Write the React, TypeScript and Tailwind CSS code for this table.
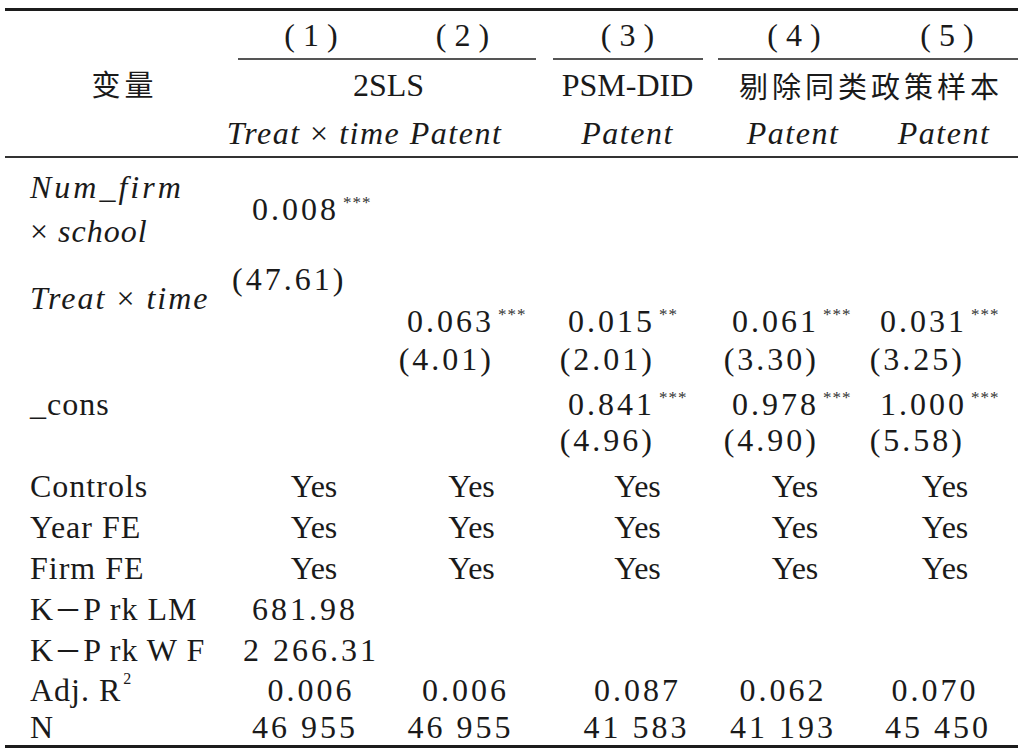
import React from 'react';

const GRID = 'grid grid-cols-[227px_158px_155px_165px_160px_148px]';
const SERIF = "font-['Liberation_Serif','Noto_Sans_CJK_SC']";

type CellSpec = { v: string; cls?: string };

// coefficient with significance stars hanging to the right of the number
function Coef({ v, s, cls = 'pr-[11px]' }: { v: string; s?: string; cls?: string }) {
	return (
		<div className={`flex items-center justify-end ${cls}`}>
			<span className={`inline-flex items-start ${SERIF}`}>
				<span className={`tracking-[3px] ${SERIF}`}>{v}</span>
				<span className={`w-[40px] pl-[4px] pt-[1px] text-[17px] leading-none tracking-[1px] text-[#333] ${SERIF}`}>{s}</span>
			</span>
		</div>
	);
}

function Plain({ v, cls = '' }: CellSpec) {
	return <div className={`flex items-center justify-center tracking-[3px] ${SERIF} ${cls}`}>{v}</div>;
}

function Label({ children }: { children: React.ReactNode }) {
	return <div className={`flex items-center pl-[25px] tracking-[1px] ${SERIF}`}>{children}</div>;
}

function Cjk({ children }: { children: React.ReactNode }) {
	return <span className="font-['Noto_Sans_CJK_SC'] text-[29px] tracking-[4px]">{children}</span>;
}

function It({ children }: { children: React.ReactNode }) {
	return <span className={`italic ${SERIF}`}>{children}</span>;
}

const yesCls = ['pl-[6px]', 'pl-[8px]', 'pl-[20px]', 'pl-[10px]', 'pl-[2px]'];

const adjRow: CellSpec[] = [
	{ v: '0.006' },
	{ v: '0.006', cls: 'pr-[4px]' },
	{ v: '0.087', cls: 'pl-[20px]' },
	{ v: '0.062', cls: 'pr-[14px]' },
	{ v: '0.070', cls: 'pr-[18px]' }
];

const nRow: CellSpec[] = [
	{ v: '46 955', cls: 'pr-[12px]' },
	{ v: '46 955', cls: 'pr-[14px]' },
	{ v: '41 583', cls: 'pl-[18px]' },
	{ v: '41 193', cls: 'pr-[14px]' },
	{ v: '45 450', cls: 'pr-[12px]' }
];

function App() {
	return (
		<div className={`h-[752px] w-[1024px] overflow-hidden bg-white pl-[5px] pr-[6px] pt-[8px] text-[32px] leading-none text-[#1a1a1a] ${SERIF}`}>
			<div className="h-[3px] bg-[#1c1c1c]" />

			{/* header */}
			<div className={`${GRID} grid-rows-[47px_2px_50px_46px] ${SERIF}`}>
				<div className="col-start-1 row-span-4 row-start-1 flex items-center justify-center pl-[12px]">
					<Cjk>变量</Cjk>
				</div>

				<div className={`col-start-2 row-start-1 flex items-center justify-center pl-[8px] tracking-[8px] ${SERIF}`}>(1)</div>
				<div className={`col-start-3 row-start-1 flex items-center justify-center pl-[8px] pr-[10px] tracking-[8px] ${SERIF}`}>(2)</div>
				<div className={`col-start-4 row-start-1 flex items-center justify-center pl-[8px] tracking-[8px] ${SERIF}`}>(3)</div>
				<div className={`col-start-5 row-start-1 flex items-center justify-center pl-[16px] tracking-[8px] ${SERIF}`}>(4)</div>
				<div className={`col-start-6 row-start-1 flex items-center justify-center pl-[14px] tracking-[8px] ${SERIF}`}>(5)</div>

				<div className="col-span-2 col-start-2 row-start-2 ml-[6px] mr-[9px] bg-[#555]" />
				<div className="col-start-4 row-start-2 ml-[8px] mr-[7px] bg-[#555]" />
				<div className="col-span-2 col-start-5 row-start-2 ml-[8px] bg-[#555]" />

				<div className={`col-span-2 col-start-2 row-start-3 flex items-center justify-center ${SERIF}`}>2SLS</div>
				<div className={`col-start-4 row-start-3 flex items-center justify-center ${SERIF}`}>PSM-DID</div>
				<div className="col-span-2 col-start-5 row-start-3 flex items-center justify-center pl-[14px]">
					<Cjk>剔除同类政策样本</Cjk>
				</div>

				<div className={`col-span-2 col-start-2 row-start-4 flex items-center justify-center pr-[48px] tracking-[1.5px] ${SERIF}`}>
					<It>Treat</It>&nbsp;×&nbsp;<It>time</It>&nbsp;<It>Patent</It>
				</div>
				<div className="col-start-4 row-start-4 flex items-center justify-center tracking-[1.5px]">
					<It>Patent</It>
				</div>
				<div className="col-start-5 row-start-4 flex items-center justify-center pl-[6px] tracking-[1.5px]">
					<It>Patent</It>
				</div>
				<div className="col-start-6 row-start-4 flex items-center justify-center tracking-[1.5px]">
					<It>Patent</It>
				</div>
			</div>

			<div className="h-[2px] bg-[#333]" />

			{/* Num_firm x school */}
			<div className={`${GRID} h-[101px]`}>
				<div className={`flex flex-col justify-center pl-[25px] ${SERIF}`}>
					<div className="leading-[44px] tracking-[3px]">
						<It>Num_firm</It>
					</div>
					<div className={`leading-[44px] tracking-[1px] ${SERIF}`}>
						× <It>school</It>
					</div>
				</div>
				<Coef v="0.008" s="***" />
			</div>

			{/* Treat x time */}
			<div className={`${GRID} grid-rows-[40px_44px]`}>
				<div className={`col-start-1 row-span-2 row-start-1 flex items-center pb-[6px] pl-[25px] tracking-[2px] ${SERIF}`}>
					<It>Treat</It>&nbsp;×&nbsp;<It>time</It>
				</div>
				<div className="col-start-2 row-start-1 grid">
					<Coef v="(47.61)" cls="pr-[14px]" />
				</div>
				<div className="col-start-3 row-start-2 grid">
					<Coef v="0.063" s="***" />
				</div>
				<div className="col-start-4 row-start-2 grid">
					<Coef v="0.015" s="**" cls="pr-[15px]" />
				</div>
				<div className="col-start-5 row-start-2 grid">
					<Coef v="0.061" s="***" />
				</div>
				<div className="col-start-6 row-start-2 grid">
					<Coef v="0.031" s="***" />
				</div>
			</div>

			<div className={`${GRID} h-[28px]`}>
				<div />
				<div />
				<Coef v="(4.01)" />
				<Coef v="(2.01)" cls="pr-[15px]" />
				<Coef v="(3.30)" />
				<Coef v="(3.25)" cls="pr-[13px]" />
			</div>

			{/* _cons */}
			<div className={`${GRID} mt-[15px] h-[36px]`}>
				<Label>_cons</Label>
				<div />
				<div />
				<Coef v="0.841" s="***" cls="pr-[15px]" />
				<Coef v="0.978" s="***" />
				<Coef v="1.000" s="***" />
			</div>
			<div className={`${GRID} h-[36px]`}>
				<div />
				<div />
				<div />
				<Coef v="(4.96)" cls="pr-[15px]" />
				<Coef v="(4.90)" />
				<Coef v="(5.58)" cls="pr-[13px]" />
			</div>

			{/* fixed effects */}
			<div className="mt-[7px]">
				{['Controls', 'Year FE', 'Firm FE'].map((name) => (
					<div key={name} className={`${GRID} h-[41px]`}>
						<Label>{name}</Label>
						{yesCls.map((cls, i) => (
							<div key={i} className={`flex items-center justify-center ${SERIF} ${cls}`}>
								Yes
							</div>
						))}
					</div>
				))}

				<div className={`${GRID} h-[41px]`}>
					<Label>
						K<span className="font-['Noto_Sans_CJK_SC'] text-[28px]">－</span>P rk LM
					</Label>
					<Plain v="681.98" cls="pr-[12px]" />
				</div>
				<div className={`${GRID} h-[41px]`}>
					<Label>
						K<span className="font-['Noto_Sans_CJK_SC'] text-[28px]">－</span>P rk W F
					</Label>
					<Plain v="2 266.31" />
				</div>

				<div className={`${GRID} h-[39px]`}>
					<Label>
						<span className="inline-flex items-start">
							Adj. R<span className="-mt-[3px] ml-[2px] text-[16px] leading-none">2</span>
						</span>
					</Label>
					{adjRow.map((c, i) => (
						<Plain key={i} v={c.v} cls={c.cls} />
					))}
				</div>
				<div className={`${GRID} h-[36px]`}>
					<Label>N</Label>
					{nRow.map((c, i) => (
						<Plain key={i} v={c.v} cls={c.cls} />
					))}
				</div>
			</div>

			<div className="h-[3px] bg-[#1c1c1c]" />
		</div>
	);
}

export default App;
